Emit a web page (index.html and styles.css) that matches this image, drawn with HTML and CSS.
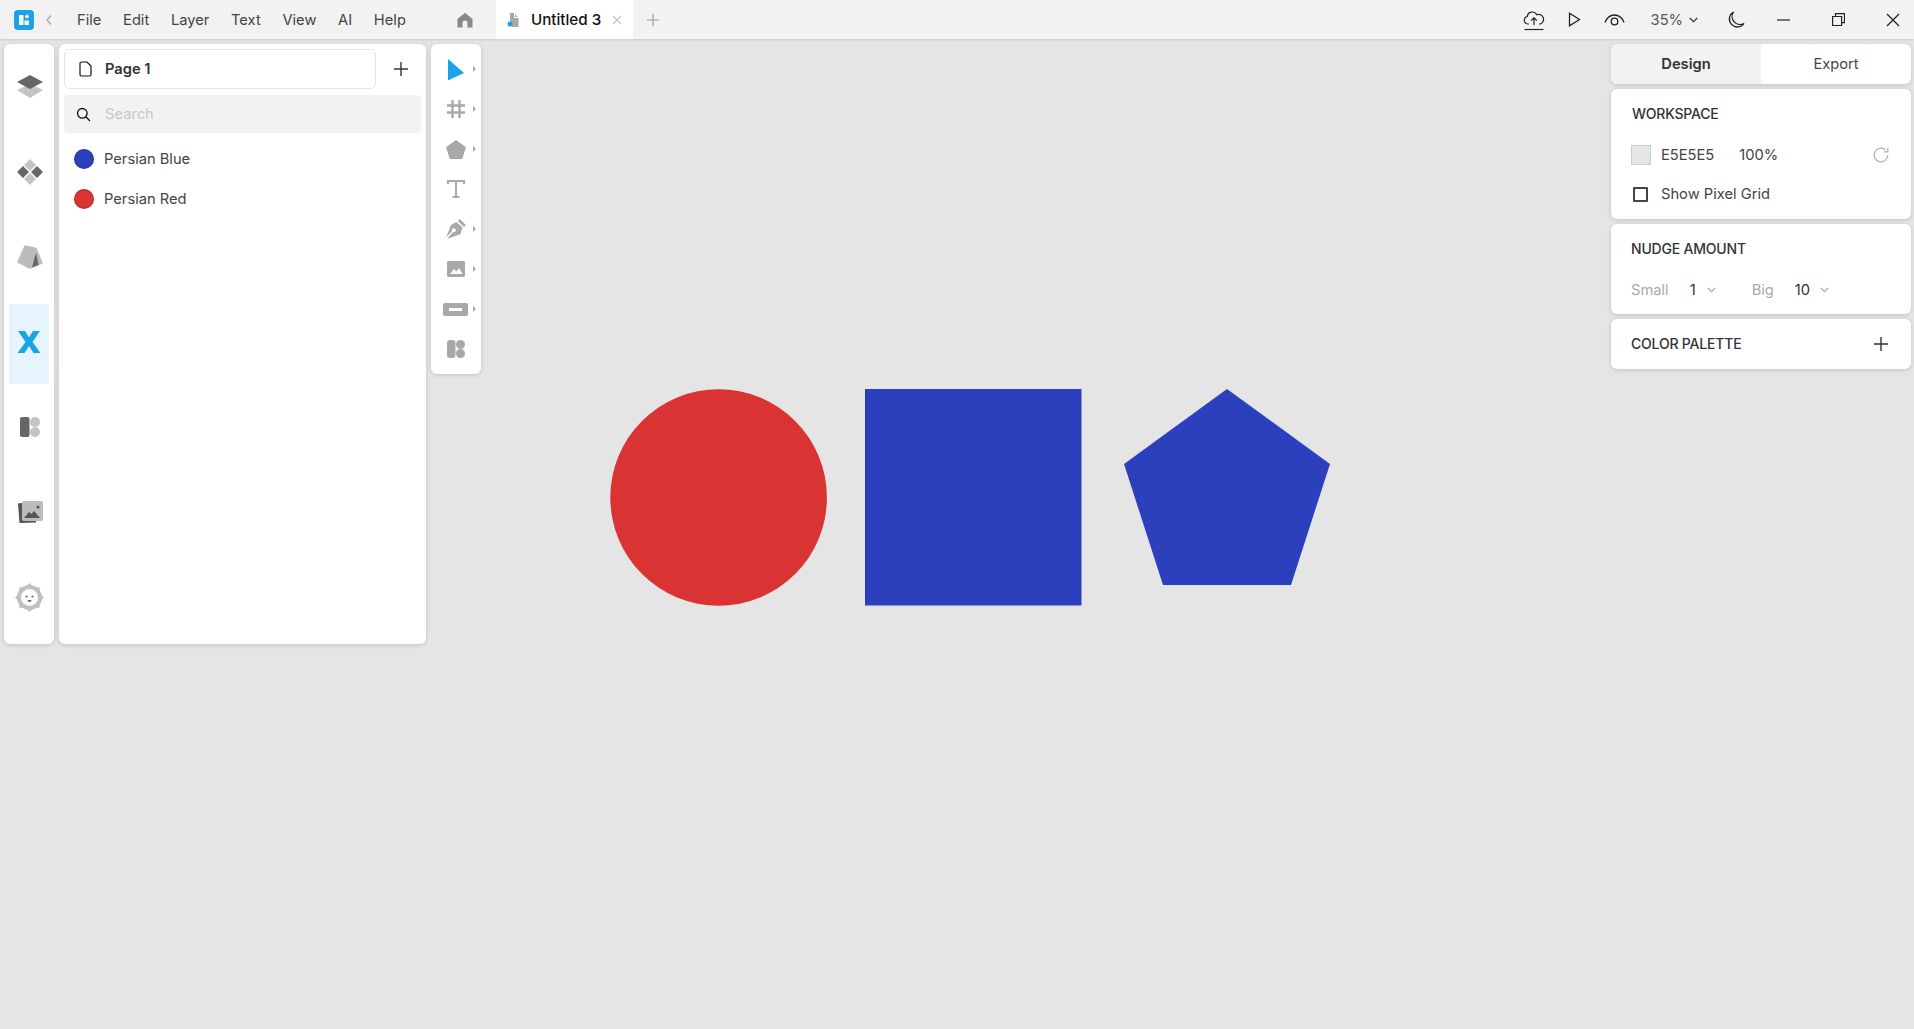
FILE: index.html
```html
<!DOCTYPE html>
<html lang="en">
<head>
  <meta charset="UTF-8" />
  <title>Untitled 3</title>
  <link rel="stylesheet" href="styles.css">
</head>
<body>
  <header class="topbar">
    <svg class="logo" width="20" height="20" viewBox="0 0 20 20"><rect width="20" height="20" rx="4" fill="#1ba3ea"/><path d="M5 5h4.500v10H5zM10.500 10.500H15V15h-4.500z" fill="#fff"/><path d="M13 4.500v4M11 6.500h4" stroke="#fff" stroke-width="1.500"/></svg>
    <svg class="back" width="8" height="12" viewBox="0 0 8 12"><path d="M6 1.500 2 6l4 4.500" fill="none" stroke="#aaa" stroke-width="1.300"/></svg>
    <nav class="menu">
      <span>File</span><span>Edit</span><span>Layer</span><span>Text</span><span>View</span><span>AI</span><span>Help</span>
    </nav>
    <svg class="home" width="16" height="16" viewBox="0 0 16 16"><path d="M8 .8 15.500 7v8.500h-5V11a2.500 2.500 0 0 0-5 0v4.500h-5V7z" fill="#888"/></svg>
    <div class="tab">
      <svg width="12" height="14" viewBox="0 0 12 14"><path d="M3 0h4l4.500 4.500V14H5V9H3z" fill="#a8a8a8"/><path d="M7.500 0v4.500H12" fill="none" stroke="#fff"/><circle cx="3" cy="11" r="2.500" fill="#1ba3ea"/></svg>
      <span class="tab-title">Untitled 3</span>
      <svg class="tab-x" width="10" height="10" viewBox="0 0 10 10"><path d="M1 1l8 8M9 1l-8 8" stroke="#c8c8c8" stroke-width="1.400"/></svg>
    </div>
    <svg class="tab-add" width="12" height="12" viewBox="0 0 12 12"><path d="M6 0v12M0 6h12" stroke="#999" stroke-width="1.200"/></svg>

    <div class="top-actions">
      <svg class="act-upload" width="22" height="22" viewBox="0 0 22 22"><path d="M6 15H4.800a3.800 3.800 0 0 1-.5-7.500 5 5 0 0 1 9.400-1.800 4.700 4.700 0 0 1 3.700 9.300H16M11 16V9M8.200 11.500 11 8.800l2.800 2.700" fill="none" stroke="#222" stroke-width="1.200"/><path d="M1.500 20.500h19" stroke="#222" stroke-width="1.200"/></svg>
      <svg class="act-play" width="13" height="15" viewBox="0 0 13 15"><path d="M1.500 1.200 11.500 7.500l-10 6.300z" fill="none" stroke="#222" stroke-width="1.300"/></svg>
      <svg class="act-eye" width="21" height="12" viewBox="0 0 21 12"><path d="M1 8.500C3 3.500 6.500 1 10.500 1S18 3.500 20 8.500" fill="none" stroke="#222" stroke-width="1.300"/><circle cx="10.500" cy="7.500" r="3.300" fill="none" stroke="#222" stroke-width="1.300"/></svg>
      <span class="zoom-val">35%</span>
      <svg class="act-chev" width="9" height="6" viewBox="0 0 9 6"><path d="M.8 1 4.500 4.700 8.200 1" fill="none" stroke="#333" stroke-width="1.200"/></svg>
      <svg class="act-moon" width="18" height="18" viewBox="0 0 18 18"><path d="M6.500 1A8 8 0 1 0 17 12.500 8 8 0 0 1 6.500 1z" fill="none" stroke="#222" stroke-width="1.300"/></svg>
      <svg class="act-min" width="13" height="2" viewBox="0 0 13 2"><path d="M0 1h13" stroke="#222" stroke-width="1.200"/></svg>
      <svg class="act-max" width="13" height="13" viewBox="0 0 13 13"><path d="M.6 3.500h9v9h-9zM3.500 3.500V.6h9v9H9.600" fill="none" stroke="#222" stroke-width="1.200"/></svg>
      <svg class="act-close" width="14" height="14" viewBox="0 0 14 14"><path d="M1 1l12 12M13 1 1 13" stroke="#222" stroke-width="1.300"/></svg>
    </div>
  </header>

  <!-- the drawing itself, free canvas -->
  <svg class="artwork" width="760" height="230" viewBox="0 0 760 230">
    <circle cx="118.600" cy="118.500" r="108.300" fill="#d93433"/>
    <rect x="265" y="10" width="216.500" height="216.500" fill="#2c40bd"/>
    <path d="M627 10 730 85 691 206H563L524 85z" fill="#2c40bd"/>
  </svg>

  <main class="workspace">
    <aside class="rail panel">
      <div class="rail-btn">
        <svg width="26" height="24" viewBox="0 0 26 24"><path d="M13 9 26 15 13 23 0 15z" fill="#c4c4c4"/><path d="M13 0 26 7 13 14 0 7z" fill="#666"/></svg>
      </div>
      <div class="rail-btn">
        <svg width="26" height="26" viewBox="0 0 26 26"><path d="M13 0l6 6-6 6-6-6z" fill="#c4c4c4"/><path d="M13 14l6 6-6 6-6-6z" fill="#c4c4c4"/><path d="M6 7l6 6-6 6-6-6zM20 7l6 6-6 6-6-6z" fill="#666"/></svg>
      </div>
      <div class="rail-btn">
        <svg width="26" height="24" viewBox="0 0 26 24"><path d="M8 1 19 3.500 25 18 13 23 1 17z" fill="#bcbcbc" stroke="#bcbcbc" stroke-width="1.500" stroke-linejoin="round"/><path d="M19 7.500 21.500 20 15 22.500z" fill="#666"/></svg>
      </div>
      <div class="rail-btn active">
        <svg width="24" height="24" viewBox="0 0 24 24"><path d="M1 1h7l4 6.500L16 1h7l-7.500 11L23.500 23h-7L12 16l-4.500 7h-7L8.500 12z" fill="#1ba3ea"/></svg>
      </div>
      <div class="rail-btn">
        <svg width="20" height="20" viewBox="0 0 20 20"><rect width="9.500" height="20" rx="2" fill="#666"/><circle cx="15" cy="5" r="5" fill="#c4c4c4"/><circle cx="15" cy="15" r="5" fill="#c4c4c4"/></svg>
      </div>
      <div class="rail-btn">
        <svg width="26" height="24" viewBox="0 0 26 24"><path d="M1 3.500 5 3v17l14 1v1.500L2.500 23z" fill="#555"/><rect x="5" y="1" width="21" height="20" rx="2" fill="#bcbcbc"/><path d="M7 18l5-6 2.500 2 2.500-3 6 7z" fill="#555"/><circle cx="21" cy="7" r="1.500" fill="#555"/></svg>
      </div>
      <div class="rail-btn">
        <svg width="29" height="29" viewBox="0 0 29 29"><circle cx="14.500" cy="14.500" r="12.500" fill="#c0c0c0"/><path d="M14.500 0l3 3h-6zM14.500 29l3-3h-6zM0 14.500l3-3v6zM29 14.500l-3-3v6zM4.300 4.300l4.200 0-4.200 4.200zM24.700 4.300l-4.200 0 4.200 4.200zM4.300 24.700l4.200 0-4.200-4.200zM24.700 24.700l-4.200 0 4.200-4.200z" fill="#c0c0c0"/><circle cx="14.500" cy="14.500" r="8.500" fill="#fff"/><circle cx="11.500" cy="13.500" r="1.100" fill="#666"/><circle cx="17.500" cy="13.500" r="1.100" fill="#666"/><path d="M12.500 17h4a2 2 0 0 1-4 0z" fill="#666"/></svg>
      </div>
    </aside>

    <section class="layers panel">
      <div class="page-row">
        <div class="page-select">
          <svg width="13" height="16" viewBox="0 0 13 16"><path d="M1 2.500A1.500 1.500 0 0 1 2.500 1H8l4 4v8.500a1.500 1.500 0 0 1-1.500 1.500h-8A1.500 1.500 0 0 1 1 13.500z" fill="none" stroke="#111" stroke-width="1.200"/></svg>
          <span>Page 1</span>
        </div>
        <svg class="page-add" width="14" height="14" viewBox="0 0 14 14"><path d="M7 0v14M0 7h14" stroke="#333" stroke-width="1.400"/></svg>
      </div>
      <div class="search">
        <svg width="15" height="15" viewBox="0 0 15 15"><circle cx="6.300" cy="6.300" r="4.800" fill="none" stroke="#111" stroke-width="1.300"/><path d="M9.800 9.800 14 14" stroke="#111" stroke-width="1.300"/></svg>
        <span>Search</span>
      </div>
      <ul class="layer-list">
        <li><i class="dot dot-blue"></i><span>Persian Blue</span></li>
        <li><i class="dot dot-red"></i><span>Persian Red</span></li>
      </ul>
    </section>

    <aside class="tools panel">
      <div class="tool">
        <svg width="16" height="21" viewBox="0 0 16 21"><path d="M0 0 16 14 1 21H0z" fill="#1ba3ea"/></svg><i class="caret"></i>
      </div>
      <div class="tool">
        <svg width="18" height="18" viewBox="0 0 18 18"><path d="M5.500 0v18M12.500 0v18M0 5.500h18M0 12.500h18" stroke="#a8a8a8" stroke-width="2.400"/></svg><i class="caret"></i>
      </div>
      <div class="tool">
        <svg width="20" height="19" viewBox="0 0 20 19"><path d="M10 0 20 7.200 16.200 19H3.800L0 7.200z" fill="#a8a8a8"/></svg><i class="caret"></i>
      </div>
      <div class="tool">
        <svg width="18" height="18" viewBox="0 0 18 18"><path d="M1 4V1h16v3M9 1v16M5.500 17h7" fill="none" stroke="#a8a8a8" stroke-width="2"/></svg>
      </div>
      <div class="tool">
        <svg width="20" height="20" viewBox="0 0 20 20"><path d="M13.500 0 20 6l-2 2-6-6zM10.500 3l6 5.500-2 6.500L1 20l6-7a2 2 0 1 0-1-1L0 18.500 5 6z" fill="#a8a8a8"/></svg><i class="caret"></i>
      </div>
      <div class="tool">
        <svg width="18" height="16" viewBox="0 0 18 16"><rect width="18" height="16" rx="1.500" fill="#a8a8a8"/><path d="M3 13l4-5 2.500 2.500L12 7l3.500 6z" fill="#fff"/></svg><i class="caret"></i>
      </div>
      <div class="tool">
        <svg width="25" height="13" viewBox="0 0 25 13"><rect width="25" height="13" rx="2" fill="#a8a8a8"/><rect x="6" y="5" width="13" height="3" fill="#fff"/></svg><i class="caret"></i>
      </div>
      <div class="tool">
        <svg width="18" height="18" viewBox="0 0 18 18"><rect width="8.500" height="18" rx="3" fill="#a8a8a8"/><circle cx="13.500" cy="4.500" r="4.500" fill="#a8a8a8"/><circle cx="13.500" cy="13.500" r="4.500" fill="#a8a8a8"/></svg>
      </div>
    </aside>

    <div class="spacer"></div>

    <aside class="props">
      <div class="tabs panel">
        <div class="tabs-item on">Design</div>
        <div class="tabs-item">Export</div>
      </div>

      <div class="card card-workspace panel">
        <h3 class="heading heading-ws">WORKSPACE</h3>
        <div class="ws-row">
          <i class="swatch"></i>
          <span class="ws-hex">E5E5E5</span>
          <span class="ws-pct">100%</span>
          <svg class="refresh" width="16" height="16" viewBox="0 0 16 16"><path d="M14.800 8a6.800 6.800 0 1 1-2.300-5.100" fill="none" stroke="#b0b0b0" stroke-width="1.200"/><path d="M14.800 1v3.800H11" fill="none" stroke="#b0b0b0" stroke-width="1.200"/></svg>
        </div>
        <label class="grid-row"><i class="check"></i>Show Pixel Grid</label>
      </div>

      <div class="card card-nudge panel">
        <h3 class="heading">NUDGE AMOUNT</h3>
        <div class="nudge-row">
          <span class="muted nudge-small">Small</span>
          <span class="nudge-one">1</span>
          <svg class="chev nudge-chev1" width="9" height="6" viewBox="0 0 9 6"><path d="M.8 1 4.500 4.700 8.200 1" fill="none" stroke="#aaa" stroke-width="1.100"/></svg>
          <span class="muted nudge-big">Big</span>
          <span class="nudge-ten">10</span>
          <svg class="chev nudge-chev2" width="9" height="6" viewBox="0 0 9 6"><path d="M.8 1 4.500 4.700 8.200 1" fill="none" stroke="#aaa" stroke-width="1.100"/></svg>
        </div>
      </div>

      <div class="card card-palette panel">
        <h3 class="heading">COLOR PALETTE</h3>
        <svg width="14" height="14" viewBox="0 0 14 14"><path d="M7 0v14M0 7h14" stroke="#333" stroke-width="1.400"/></svg>
      </div>
    </aside>
  </main>
</body>
</html>
```

FILE: styles.css
```css
* {
  box-sizing: border-box;
  margin: 0;
  padding: 0;
}

html, body {
  height: 100%;
}

body {
  background-color: #e5e5e5;
  color: #333;
  font-family: Inter, "Open Sans", sans-serif;
  font-size: 14.7px;
  overflow: hidden;
  position: relative;
}

svg {
  display: block;
  flex: none;
}

i {
  display: block;
  flex: none;
}

/* top bar */
.topbar {
  height: 39px;
  background-color: #f2f2f2;
  box-shadow: 0 1px 2px rgba(0,0,0,0.12);
  display: flex;
  align-items: center;
  padding-left: 14px;
}

.back {
  margin-left: 11px;
}

.menu {
  display: flex;
  gap: 21.700px;
  margin-left: 24px;
  color: #444;
}

.home {
  margin-left: 51px;
}

.tab {
  width: 137px;
  height: 39px;
  margin-left: 23px;
  background-color: #fff;
  display: flex;
  align-items: center;
  padding-left: 11px;
}

.tab-title {
  margin-left: 12px;
  font-size: 15.200px;
  font-weight: 500;
  color: #111;
}

.tab-x {
  margin-left: 11px;
}

.tab-add {
  margin-left: 14px;
}

.top-actions {
  margin-left: auto;
  display: flex;
  align-items: center;
  padding-right: 14px;
}

.act-upload { margin-right: -1px; }
.act-play { margin-left: 24px; }
.act-eye { margin-left: 23px; }
.zoom-val { margin-left: 26px; color: #555; }
.act-chev { margin-left: 6px; }
.act-moon { margin-left: 29px; }
.act-min { margin-left: 32px; }
.act-max { margin-left: 42px; }
.act-close { margin-left: 41px; }

/* canvas */
.artwork {
  position: absolute;
  left: 600px;
  top: 379px;
}

/* panels */
.workspace {
  position: absolute;
  top: 44px;
  left: 4px;
  right: 3px;
  display: flex;
  align-items: flex-start;
  gap: 5px;
}

.panel {
  background-color: #fff;
  border-radius: 6px;
  box-shadow: 0 1px 4px rgba(0,0,0,0.16);
}

.rail {
  width: 50px;
  height: 600px;
  display: flex;
  flex-direction: column;
  align-items: center;
  padding-top: 5px;
}

.rail-btn {
  width: 40px;
  height: 80px;
  flex: none;
  margin-bottom: 5px;
  padding-bottom: 4px;
  padding-left: 1px;
  display: flex;
  align-items: center;
  justify-content: center;
  border-radius: 2px;
}

.rail-btn.active {
  background-color: #e6f4fd;
  padding-left: 0;
}

.layers {
  width: 367px;
  height: 600px;
  padding: 5px;
}

.page-row {
  display: flex;
  align-items: center;
}

.page-select {
  width: 312px;
  height: 40px;
  border: 1px solid #e4e4e4;
  border-radius: 6px;
  display: flex;
  align-items: center;
  gap: 13px;
  padding-left: 14px;
  font-weight: 600;
}

.page-select span,
.search span,
.layer-list span,
.tabs-item {
  padding-bottom: 1px;
}

.page-add {
  margin-left: 18px;
}

.search {
  width: 357px;
  height: 38px;
  margin-top: 6px;
  background-color: #f2f2f2;
  border-radius: 4px;
  display: flex;
  align-items: center;
  gap: 14px;
  padding-left: 12px;
  color: #c8c8c8;
}

.layer-list {
  list-style: none;
  margin-top: 6px;
}

.layer-list li {
  height: 40px;
  display: flex;
  align-items: center;
  gap: 10px;
  padding-left: 10px;
  color: #444;
}

.dot {
  width: 20px;
  height: 20px;
  border-radius: 50%;
  border: 1px solid rgba(0,0,0,0.2);
}

.dot-blue { background-color: #2c40bd; }
.dot-red { background-color: #d93433; }

.tools {
  width: 50px;
  height: 330px;
  padding-top: 5px;
}

.tool {
  height: 40px;
  position: relative;
  display: flex;
  align-items: center;
  justify-content: center;
  padding-right: 1px;
}

.caret {
  position: absolute;
  right: 5px;
  top: 17px;
  border-left: 3px solid #a8a8a8;
  border-top: 3px solid transparent;
  border-bottom: 3px solid transparent;
}

.spacer {
  flex: 1;
}

/* right side */
.props {
  width: 300px;
  display: flex;
  flex-direction: column;
  gap: 5px;
}

.tabs {
  height: 40px;
  display: flex;
  overflow: hidden;
}

.tabs-item {
  flex: 1;
  display: flex;
  align-items: center;
  justify-content: center;
  color: #444;
}

.tabs-item.on {
  background-color: #f2f2f2;
  font-weight: 600;
  color: #333;
}

.card {
  padding: 0 20px;
}

.heading {
  font-size: 14px;
  font-weight: 500;
  letter-spacing: -0.2px;
  color: #333;
}

.card-workspace {
  height: 130px;
  padding-top: 16px;
}

.heading-ws {
  margin-left: 1px;
}

.ws-row {
  display: flex;
  align-items: center;
  margin-top: 23px;
  height: 20px;
  color: #444;
}

.swatch {
  width: 20px;
  height: 20px;
  background-color: #e5e5e5;
  border: 1px solid #ccc;
}

.ws-hex {
  margin-left: 10px;
}

.ws-pct {
  margin-left: 25px;
}

.refresh {
  margin-left: auto;
  margin-right: 2px;
}

.grid-row {
  display: flex;
  align-items: center;
  margin-top: 20px;
  margin-left: 2px;
  color: #444;
}

.check {
  width: 15px;
  height: 15px;
  border: 2px solid #444;
  border-radius: 1px;
  margin-right: 13px;
}

.card-nudge {
  height: 90px;
  padding-top: 16px;
}

.nudge-row {
  display: flex;
  align-items: center;
  margin-top: 24px;
  color: #334;
}

.muted {
  color: #aaa;
}

.nudge-one { margin-left: 21px; }
.nudge-chev1 { margin-left: 11px; }
.nudge-big { margin-left: 36px; }
.nudge-ten { margin-left: 21px; }
.nudge-chev2 { margin-left: 10px; }

.card-palette {
  height: 50px;
  display: flex;
  align-items: center;
  justify-content: space-between;
  padding-right: 23px;
}

.card-palette .heading {
  padding-bottom: 1px;
}
```
